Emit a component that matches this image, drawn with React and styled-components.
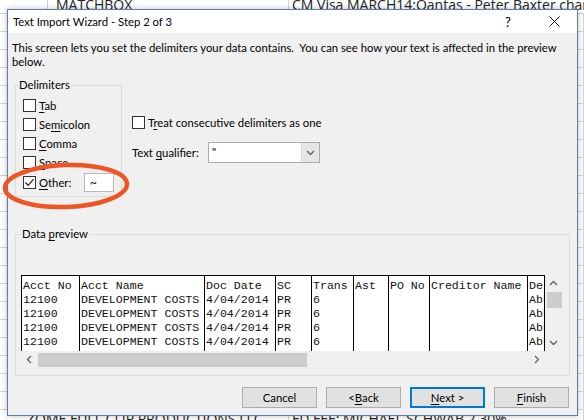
import React from "react";
import styled, { createGlobalStyle } from "styled-components";

const GlobalStyle = createGlobalStyle`
  body {
    margin: 0;
    background: #fff;
  }
`;

const UI_FONT = `Lato, "Noto Sans", sans-serif`;
const UI_SIZE = "11.3px";
const MONO_FONT = `"Liberation Mono", "DejaVu Sans Mono", monospace`;

// ---------- spreadsheet behind the dialog ----------
const Screen = styled.div`
  position: relative;
  width: 584px;
  height: 420px;
  overflow: hidden;
  background: #fff;
`;
const SheetRows = styled.div`
  display: flex;
  flex-direction: column;
  margin-top: -4px;
`;
const SheetRow = styled.div`
  flex: none;
  height: 18px;
  box-sizing: border-box;
  display: grid;
  grid-template-columns: 48px 241px 1fr;
  border-bottom: 1px solid #d4d4d4;
`;
const SheetCell = styled.div`
  border-right: 1px solid #d4d4d4;
  padding-left: ${(p) => p.$pad || 3}px;
  white-space: nowrap;
  overflow: visible;
  font-family: "Open Sans", "Liberation Sans", sans-serif;
  font-size: 14px;
  line-height: 18px;
  color: #222;
`;
const SheetShift = styled.span`
  margin-left: -24px;
`;

// ---------- dialog ----------
const Dialog = styled.div`
  position: absolute;
  left: 7px;
  top: 9px;
  width: 571px;
  height: 407px;
  box-sizing: border-box;
  border: 1px solid #5a7fae;
  background: #f0f0f0;
  display: flex;
  flex-direction: column;
  font-family: ${UI_FONT};
  font-size: ${UI_SIZE};
  color: #000;
  box-shadow: 0 0 6px rgba(0, 0, 0, 0.25);
`;
const TitleBar = styled.div`
  flex: none;
  height: 23px;
  background: #fff;
  display: flex;
  align-items: center;
  padding-left: 5px;
`;
const Title = styled.div`
  flex: 1;
`;
const CaptionButton = styled.div`
  width: 46px;
  height: 23px;
  display: flex;
  align-items: center;
  justify-content: center;
  font-size: 13px;
`;
const Body = styled.div`
  flex: 1;
  display: flex;
  flex-direction: column;
  padding: 8px 8px 7px 4px;
`;
const Description = styled.p`
  margin: 0;
  line-height: 14px;
  white-space: nowrap;
`;
const Key = styled.span`
  text-decoration: underline;
  text-underline-offset: 2px;
`;
const TopSection = styled.div`
  display: flex;
  margin: 9px 0 0 3px;
`;
const GroupBox = styled.fieldset`
  margin: 0;
  box-sizing: border-box;
  width: ${(p) => p.$width};
  border: 1px solid #dcdcdc;
  padding: ${(p) => p.$pad};
`;
const GroupTitle = styled.legend`
  padding: 0 1px;
  line-height: 14px;
  font-size: ${UI_SIZE};
`;
const CheckList = styled.div`
  display: flex;
  flex-direction: column;
  padding-left: 5px;
`;
const CheckRow = styled.label`
  display: flex;
  align-items: center;
  height: ${(p) => p.$h || 19}px;
  white-space: nowrap;
`;
const Box = styled.span`
  flex: none;
  width: 13px;
  height: 13px;
  box-sizing: border-box;
  border: 1px solid #333;
  background: #fff;
  margin-right: 3px;
  display: flex;
  align-items: center;
  justify-content: center;
`;
const OtherLabel = styled.span`
  width: 45px;
`;
const SmallInput = styled.div`
  width: 30px;
  height: 19px;
  box-sizing: border-box;
  border: 1px solid #b9b9b9;
  background: #fff;
  padding: 1px 0 0 5px;
  font-size: 12px;
`;
const Options = styled.div`
  display: flex;
  flex-direction: column;
  margin-left: 10px;
  padding-top: 35px;
`;
const QualifierRow = styled.div`
  display: flex;
  align-items: center;
  margin-top: 10px;
  height: 21px;
`;
const QualifierLabel = styled.span`
  width: 76px;
  white-space: nowrap;
`;
const Combo = styled.div`
  width: 112px;
  height: 21px;
  box-sizing: border-box;
  border: 1px solid #acacac;
  background: #fff;
  display: flex;
`;
const ComboValue = styled.div`
  flex: 1;
  padding: 2px 0 0 3px;
  line-height: 14px;
`;
const ComboArrow = styled.div`
  width: 17px;
  background: #e5e5e5;
  border-left: 1px solid #d6d6d6;
  display: flex;
  align-items: center;
  justify-content: center;
`;
const PreviewSection = styled.div`
  margin: 30px 0 0 3px;
`;
const Preview = styled.div`
  display: grid;
  grid-template-columns: 524px 17px;
  grid-template-rows: 76px 17px;
  width: 541px;
`;
const Table = styled.div`
  box-sizing: border-box;
  border: 1px solid #000;
  border-bottom: none;
  background: #fff;
  display: grid;
  grid-template-columns: 57px 125px 71px 36px 42px 35px 41px 98px 1fr;
  overflow: hidden;
  font-family: ${MONO_FONT};
  font-size: 11.6px;
  line-height: 14px;
  color: #111;
`;
const Column = styled.div`
  box-sizing: border-box;
  border-left: ${(p) => (p.$first ? "none" : "1px solid #000")};
  padding: 3px 0 0 1px;
  white-space: pre;
  overflow: hidden;
`;
const ScrollTrack = styled.div`
  background: #f0f0f0;
  display: flex;
  flex-direction: ${(p) => (p.$vertical ? "column" : "row")};
  align-items: center;
`;
const ScrollArrow = styled.div`
  flex: none;
  width: 17px;
  height: 17px;
  display: flex;
  align-items: center;
  justify-content: center;
`;
const Thumb = styled.div`
  background: #cdcdcd;
  ${(p) =>
    p.$vertical
      ? "width: 15px; height: 16px; margin-left: 1px;"
      : "height: 14px; width: 269px;"}
`;
const Spacer = styled.div`
  flex: 1;
`;
const Corner = styled.div`
  background: #f0f0f0;
`;
const ButtonRow = styled.div`
  display: flex;
  justify-content: flex-end;
  gap: 9px;
  margin-top: 11px;
`;
const Button = styled.div`
  width: 75px;
  height: 21px;
  box-sizing: border-box;
  border: ${(p) => (p.$primary ? "2px solid #0078d7" : "1px solid #adadad")};
  background: #e1e1e1;
  display: flex;
  align-items: center;
  justify-content: center;
`;
const Annotation = styled.svg`
  position: absolute;
  left: 0;
  top: 160px;
  pointer-events: none;
`;

const Check = ({ checked }) => (
  <Box>
    {checked && (
      <svg width="11" height="11" viewBox="0 0 11 11">
        <path d="M1.5 5.5 L4.2 8.3 L9.6 2.2" fill="none" stroke="#222" strokeWidth="1.2" />
      </svg>
    )}
  </Box>
);

const Chevron = ({ dir }) => {
  const paths = {
    up: "M1 6 L4.5 2.5 L8 6",
    down: "M1 3 L4.5 6.5 L8 3",
    left: "M6 1 L2.5 4.5 L6 8",
    right: "M3 1 L6.5 4.5 L3 8",
  };
  return (
    <svg width="9" height="9" viewBox="0 0 9 9">
      <path d={paths[dir]} fill="none" stroke="#606060" strokeWidth="1.3" />
    </svg>
  );
};

const columns = [
  ["Acct No", "12100", "12100", "12100", "12100"],
  ["Acct Name", "DEVELOPMENT COSTS", "DEVELOPMENT COSTS", "DEVELOPMENT COSTS", "DEVELOPMENT COSTS"],
  ["Doc Date", "4/04/2014", "4/04/2014", "4/04/2014", "4/04/2014"],
  ["SC", "PR", "PR", "PR", "PR"],
  ["Trans", "6", "6", "6", "6"],
  ["Ast", "", "", "", ""],
  ["PO No", "", "", "", ""],
  ["Creditor Name", "", "", "", ""],
  ["Description", "Abbott", "Abbott", "Abbott", "Abbott"],
];

const sheetRows = Array.from({ length: 24 }, (_, i) => i);

export default function App() {
  return (
    <Screen>
      <GlobalStyle />
      <SheetRows>
        {sheetRows.map((i) => (
          <SheetRow key={i}>
            <SheetCell />
            <SheetCell $pad={i === 23 ? 0 : 8}>
              {i === 0 && "MATCHBOX"}
              {i === 23 && <SheetShift>ZOME FULL CLIP PRODUCTIONS LLC</SheetShift>}
            </SheetCell>
            <SheetCell>
              {i === 0 && "CM Visa MARCH14:Qantas - Peter Baxter change of flight"}
              {i === 23 && "FD FEE: MICHAEL SCHWAB 2 30%"}
            </SheetCell>
          </SheetRow>
        ))}
      </SheetRows>

      <Dialog>
        <TitleBar>
          <Title>Text Import Wizard - Step 2 of 3</Title>
          <CaptionButton>?</CaptionButton>
          <CaptionButton>
            <svg width="11" height="11" viewBox="0 0 11 11">
              <path d="M0.5 0.5 L10.5 10.5 M10.5 0.5 L0.5 10.5" stroke="#111" strokeWidth="1" />
            </svg>
          </CaptionButton>
        </TitleBar>
        <Body>
          <Description>
            This screen lets you set the delimiters your data contains.&nbsp; You can see how your
            text is affected in the preview
            <br />
            below.
          </Description>

          <TopSection>
            <GroupBox $width="107px" $pad="4px 0 3px 2px">
              <GroupTitle>Delimiters</GroupTitle>
              <CheckList>
                <CheckRow>
                  <Check />
                  <span><Key>T</Key>ab</span>
                </CheckRow>
                <CheckRow>
                  <Check />
                  <span>Se<Key>m</Key>icolon</span>
                </CheckRow>
                <CheckRow>
                  <Check />
                  <span><Key>C</Key>omma</span>
                </CheckRow>
                <CheckRow>
                  <Check />
                  <span><Key>S</Key>pace</span>
                </CheckRow>
                <CheckRow $h={21}>
                  <Check checked />
                  <OtherLabel><Key>O</Key>ther:</OtherLabel>
                  <SmallInput>~</SmallInput>
                </CheckRow>
              </CheckList>
            </GroupBox>

            <Options>
              <CheckRow>
                <Check />
                <span>T<Key>r</Key>eat consecutive delimiters as one</span>
              </CheckRow>
              <QualifierRow>
                <QualifierLabel>Text <Key>q</Key>ualifier:</QualifierLabel>
                <Combo>
                  <ComboValue>"</ComboValue>
                  <ComboArrow>
                    <Chevron dir="down" />
                  </ComboArrow>
                </Combo>
              </QualifierRow>
            </Options>
          </TopSection>

          <PreviewSection>
            <GroupBox $width="555px" $pad="34px 0 7px 5px">
              <GroupTitle>
                Data <Key>p</Key>review
              </GroupTitle>
              <Preview>
                <Table>
                  {columns.map((col, ci) => (
                    <Column key={ci} $first={ci === 0}>
                      {col.join("\n")}
                    </Column>
                  ))}
                </Table>
                <ScrollTrack $vertical>
                  <ScrollArrow>
                    <Chevron dir="up" />
                  </ScrollArrow>
                  <Thumb $vertical />
                  <Spacer />
                  <ScrollArrow>
                    <Chevron dir="down" />
                  </ScrollArrow>
                </ScrollTrack>
                <ScrollTrack>
                  <ScrollArrow>
                    <Chevron dir="left" />
                  </ScrollArrow>
                  <Thumb />
                  <Spacer />
                  <ScrollArrow>
                    <Chevron dir="right" />
                  </ScrollArrow>
                </ScrollTrack>
                <Corner />
              </Preview>
            </GroupBox>
          </PreviewSection>

          <ButtonRow>
            <Button>Cancel</Button>
            <Button>
              &lt; <Key>B</Key>ack
            </Button>
            <Button $primary>
              <Key>N</Key>ext &gt;
            </Button>
            <Button>
              <Key>F</Key>inish
            </Button>
          </ButtonRow>
        </Body>
      </Dialog>

      <Annotation width="136" height="54" viewBox="0 0 136 54">
        <ellipse
          cx="66"
          cy="26"
          rx="61"
          ry="21"
          fill="none"
          stroke="#ef5423"
          strokeWidth="4.5"
          transform="rotate(-2 66 26)"
        />
      </Annotation>
    </Screen>
  );
}
